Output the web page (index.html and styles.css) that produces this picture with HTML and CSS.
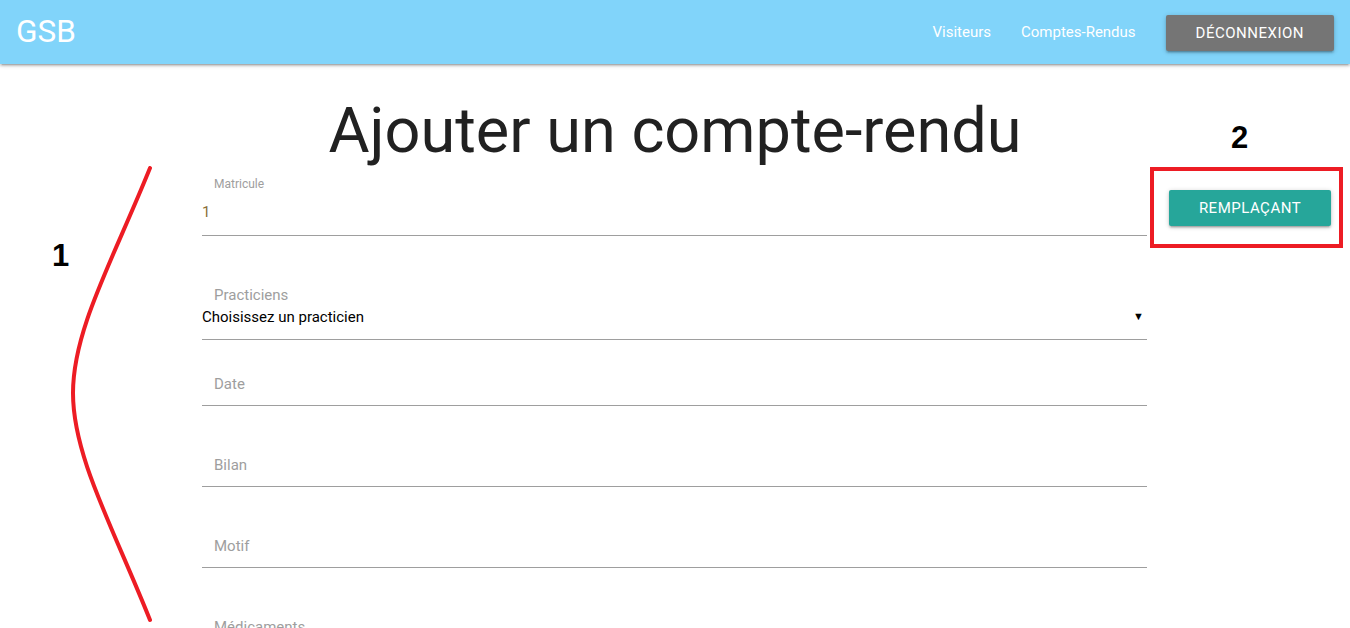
FILE: index.html
```html
<!DOCTYPE html>
<html lang="fr">
<head>
<meta charset="utf-8">
<title>GSB - Ajouter un compte-rendu</title>
<link rel="stylesheet" href="styles.css">
</head>
<body>
<nav class="navbar">
  <a class="brand" href="#">GSB</a>
  <ul class="nav-links">
    <li><a href="#">Visiteurs</a></li>
    <li><a href="#">Comptes-Rendus</a></li>
    <li><a class="btn btn-grey" href="#">Déconnexion</a></li>
  </ul>
</nav>

<h1 class="page-title">Ajouter un compte-rendu</h1>

<main class="layout">
  <aside class="side-left">
    <span class="annot annot-1">1</span>
    <svg class="annot-curve" width="202" height="470" viewBox="0 166 202 470" aria-hidden="true">
      <path d="M150 168 C112 262 73 330 73 393 C73 456 112 525 150 620" fill="none" stroke="#ed1c24" stroke-width="4" stroke-linecap="round"/>
    </svg>
  </aside>

  <form class="form">
    <div class="field field-active">
      <label class="label-small">Matricule</label>
      <div class="input-row"><span class="value-disabled">1</span></div>
    </div>

    <div class="field field-select">
      <label class="label">Practiciens</label>
      <div class="select-row">
        <span class="select-text">Choisissez un practicien</span>
        <span class="caret">▼</span>
      </div>
    </div>

    <div class="field field-plain"><label class="label">Date</label></div>
    <div class="field field-plain"><label class="label">Bilan</label></div>
    <div class="field field-plain"><label class="label">Motif</label></div>
    <div class="field field-plain"><label class="label">Médicaments</label></div>
  </form>

  <aside class="side-right">
    <div class="highlight">
      <span class="annot annot-2">2</span>
      <a class="btn btn-teal" href="#">Remplaçant</a>
    </div>
  </aside>
</main>
</body>
</html>
```

FILE: styles.css
```css
* { box-sizing: border-box; }

html, body {
  margin: 0;
  padding: 0;
  background: #fff;
  font-family: Roboto, "Liberation Sans", sans-serif;
  font-size: 15px;
  color: rgba(0, 0, 0, 0.87);
  overflow: hidden;
}

a { text-decoration: none; }

/* ---------- navbar ---------- */
.navbar {
  height: 64px;
  background: #81d4fa;
  display: flex;
  align-items: center;
  justify-content: space-between;
  padding-left: 16px;
  box-shadow: 0 2px 2px 0 rgba(0,0,0,.14), 0 3px 1px -2px rgba(0,0,0,.12), 0 1px 5px 0 rgba(0,0,0,.2);
  position: relative;
  z-index: 2;
}

.brand {
  color: #fff;
  font-size: 31.5px;
  line-height: 64px;
}

.nav-links {
  list-style: none;
  margin: 0;
  padding: 0;
  display: flex;
  align-items: center;
  height: 64px;
}

.nav-links li { padding: 0 15px; }
.nav-links li:last-child { padding-right: 16px; padding-top: 1px; }

.nav-links a {
  color: #fff;
  font-size: 15px;
  line-height: 64px;
  display: block;
}

.btn {
  display: inline-block;
  height: 36px;
  line-height: 36px !important;
  padding: 0 30px;
  border-radius: 2px;
  color: #fff;
  font-size: 15px;
  letter-spacing: .5px;
  text-transform: uppercase;
  box-shadow: 0 2px 2px 0 rgba(0,0,0,.14), 0 3px 1px -2px rgba(0,0,0,.12), 0 1px 5px 0 rgba(0,0,0,.2);
  text-align: center;
  white-space: nowrap;
}

.btn-grey { background: #757575; }
.nav-links .btn { display: inline-block; }
.btn-teal { background: #26a69a; width: 162px; padding: 0; }

/* ---------- title ---------- */
.page-title {
  margin: 32px 0 0;
  height: 70px;
  font-size: 63px;
  line-height: 70px;
  font-weight: 400;
  text-align: center;
  color: #212121;
}

/* ---------- layout ---------- */
.layout {
  display: grid;
  grid-template-columns: 202px 945px 1fr;
  height: 462px;
}

.side-left { position: relative; }

.annot {
  font-family: "Liberation Sans", Arial, sans-serif;
  font-weight: 700;
  font-size: 31px;
  color: #000;
  line-height: 1;
}

.annot-1 {
  position: absolute;
  left: 52px;
  top: 74px;
}

.annot-curve {
  position: absolute;
  left: 0;
  top: 0;
}

/* ---------- form ---------- */
.form {
  display: flex;
  flex-direction: column;
  padding-top: 10px;
}

.field {
  border-bottom: 1px solid #9e9e9e;
}

.label, .label-small {
  display: block;
  color: #9e9e9e;
  padding-left: 12px;
}

.label-small {
  font-size: 12px;
  line-height: 16px;
}

.label { font-size: 15px; }

.input-row {
  height: 43px;
  padding-top: 8px;
  line-height: 24px;
  font-size: 15px;
}

.value-disabled { color: #8a6f3a; }

.field-select { margin-top: 49px; }

.field-select .label {
  line-height: 20px;
}

.select-row {
  height: 34px;
  display: flex;
  justify-content: space-between;
  line-height: 24px;
  font-size: 15px;
  color: #000;
}

.caret {
  font-size: 11px;
  padding-right: 3px;
  color: #000;
}

.field-plain {
  height: 45px;
  display: flex;
  align-items: center;
  padding-top: 2px;
  margin-top: 36px;
}

.field-select + .field-plain { margin-top: 21px; }

/* ---------- right column ---------- */
.side-right {
  display: flex;
  justify-content: flex-start;
  align-items: flex-start;
}

.highlight {
  position: relative;
  margin-left: 3px;
  margin-top: 1px;
  width: 193px;
  height: 81px;
  border: 4px solid #ed1c24;
  padding: 19px 8px 0 15px;
}

.annot-2 {
  position: absolute;
  left: 77px;
  top: -49px;
}
```
